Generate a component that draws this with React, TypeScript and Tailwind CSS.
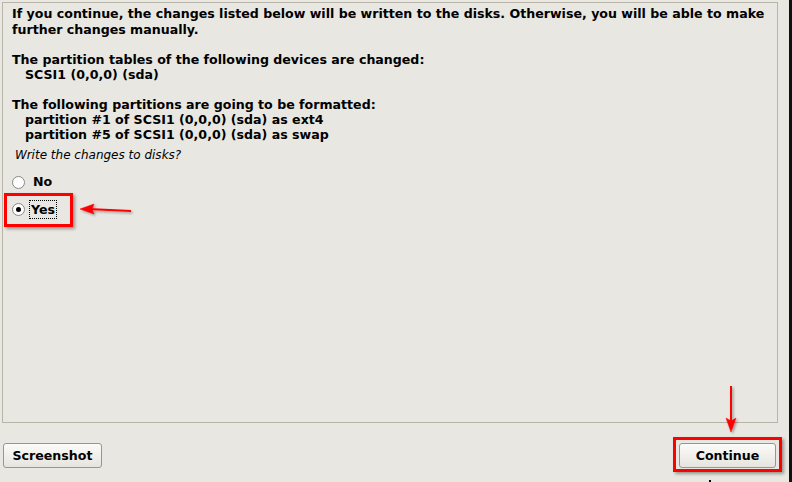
import React from 'react';

const lines = [
  'If you continue, the changes listed below will be written to the disks. Otherwise, you will be able to make',
  'further changes manually.',
];

export default function App() {
  return (
    <div
      className="relative w-[792px] h-[482px] bg-[#e8e7e1] overflow-hidden text-black"
      style={{ fontFamily: '"DejaVu Sans", "Liberation Sans", sans-serif' }}
    >
      {/* dark window edge on the right */}
      <div className="absolute right-0 top-0 w-[3px] h-full bg-[#111]" />

      {/* Main panel */}
      <div className="absolute left-[2px] top-[2px] w-[776px] h-[421px] border border-[#b8b4a8] pl-[9px] pt-[3px]">
        <div className="text-[12.6px] font-bold leading-[15px] whitespace-nowrap">
          <div className="mb-[1px]">{lines[0]}</div>
          <div>{lines[1]}</div>
          <div className="h-[15px]" />
          <div>The partition tables of the following devices are changed:</div>
          <div className="pl-[13px]">SCSI1 (0,0,0) (sda)</div>
          <div className="h-[15px]" />
          <div>The following partitions are going to be formatted:</div>
          <div className="pl-[13px]">partition #1 of SCSI1 (0,0,0) (sda) as ext4</div>
          <div className="pl-[13px]">partition #5 of SCSI1 (0,0,0) (sda) as swap</div>
        </div>
        <div className="mt-[5px] pl-[3px] text-[12px] italic leading-[16px]">Write the changes to disks?</div>

        <div className="mt-[11px] flex flex-col gap-[10px]">
          <div className="flex items-center gap-[6px]">
            <span className="w-[13px] h-[13px] rounded-full border border-[#888] bg-white" />
            <span className="text-[12.6px] font-bold leading-[16px] px-[2px]">No</span>
          </div>
          <div className="flex items-center gap-[4px]">
            <span className="w-[13px] h-[13px] rounded-full border border-[#888] bg-white flex items-center justify-center">
              <span className="w-[5px] h-[5px] rounded-full bg-black" />
            </span>
            <span className="text-[12.6px] font-bold leading-[17px] px-[1px] py-[0px] border border-dotted border-black">Yes</span>
          </div>
        </div>
      </div>

      {/* Bottom buttons */}
      <button className="absolute left-[3px] top-[443px] w-[99px] h-[25px] pt-[1px] rounded-[3px] border border-[#9a968c] bg-gradient-to-b from-[#fbfbf9] to-[#e6e4de] text-[12.6px] font-bold">
        Screenshot
      </button>
      <button className="absolute left-[679px] top-[443px] w-[97px] h-[25px] pt-[1px] rounded-[3px] border border-[#9a968c] bg-gradient-to-b from-[#fbfbf9] to-[#e6e4de] text-[12.6px] font-bold">
        Continue
      </button>

      {/* Annotations */}
      <div className="absolute left-[4px] top-[193px] w-[69px] h-[34px] border-[3px] border-[#ff0000] shadow-[2px_2px_3px_rgba(0,0,0,0.35)]" />
      <div className="absolute left-[673px] top-[437px] w-[109px] h-[35px] border-[3px] border-[#ff0000] shadow-[2px_2px_3px_rgba(0,0,0,0.35)]" />
      <svg className="absolute left-0 top-0" width="792" height="482">
        <defs>
          <filter id="sh" x="-20%" y="-20%" width="140%" height="140%">
            <feDropShadow dx="1.5" dy="1.5" stdDeviation="1" floodOpacity="0.35" />
          </filter>
        </defs>
        <g filter="url(#sh)" fill="#ff0000" stroke="#ff0000">
          <line x1="131" y1="211" x2="88" y2="209" strokeWidth="2" />
          <polygon points="80,209 94,204 92,209 94,214" strokeWidth="0.5" />
          <line x1="731" y1="386" x2="731" y2="424" strokeWidth="2" />
          <polygon points="731,432 726,418 731,421 736,418" strokeWidth="0.5" />
        </g>
      </svg>
      <div className="absolute left-[709px] top-[480px] w-[2px] h-[2px] bg-black" />
    </div>
  );
}
